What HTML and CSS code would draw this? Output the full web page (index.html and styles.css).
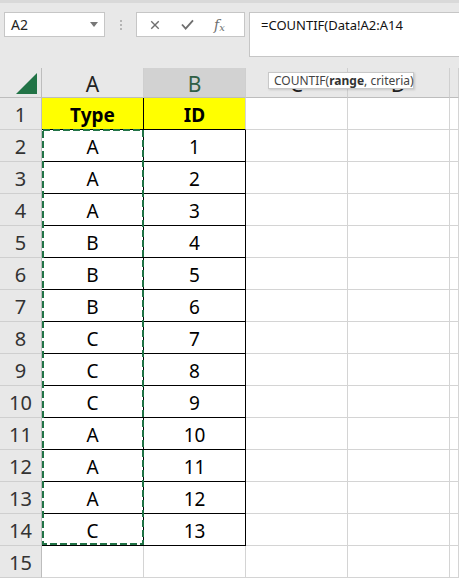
FILE: index.html
```html
<!DOCTYPE html>
<html>
  <head>
    <link rel="stylesheet" href="styles.css">
  </head>
  <body>
    <div class="app">
      <!-- formula bar -->
      <div class="toolbar">
        <div class="name-box">
          <span>A2</span>
          <svg class="caret" viewBox="0 0 8 5"><polygon points="0,0 8,0 4,5"></polygon></svg>
        </div>
        <div class="grip"><i></i><i></i><i></i></div>
        <div class="fx-box">
          <svg class="tool" viewBox="0 0 12 12">
            <line x1="1.5" y1="1.5" x2="10.5" y2="10.5"></line>
            <line x1="10.5" y1="1.5" x2="1.5" y2="10.5"></line>
          </svg>
          <svg class="tool check" viewBox="0 0 14 12">
            <polyline points="1,6 5,10.5 13,1.5"></polyline>
          </svg>
          <span class="fx">f<sub>x</sub></span>
        </div>
        <div class="formula">=COUNTIF(Data!A2:A14</div>
      </div>

      <!-- sheet -->
      <div class="sheet">
        <div class="corner">
          <svg viewBox="0 0 22 22"><polygon points="0,22 22,22 22,0"></polygon></svg>
        </div>
        <div class="col-head">A</div>
        <div class="col-head selected">B</div>
        <div class="col-head">C</div>
        <div class="col-head">D</div>
        <div class="col-head"></div>
      </div>
      <div class="sheet" id="rows"></div>

      <div class="copy-marquee">
        <svg viewBox="0 0 102 416" width="102" height="416">
          <rect x="1" y="1" width="100" height="414"></rect>
        </svg>
      </div>
      <div class="tooltip">COUNTIF(<b>range</b>, criteria)</div>
    </div>

    <script>
      const types = ["A", "A", "A", "B", "B", "B", "C", "C", "C", "A", "A", "A", "C"];
      const rows = document.getElementById("rows");

      const cell = (cls, text) => {
        const el = document.createElement("div");
        el.className = cls;
        el.textContent = text;
        rows.appendChild(el);
      };

      for (let r = 1; r <= 15; r++) {
        cell("row-head", r);
        if (r === 1) {
          cell("cell data head-cell", "Type");
          cell("cell data head-cell last", "ID");
        } else if (r <= 14) {
          cell("cell data", types[r - 2]);
          cell("cell data edge", r - 1);
        } else {
          cell("cell", "");
          cell("cell", "");
        }
        cell("cell", "");
        cell("cell", "");
        cell("cell", "");
      }
    </script>
  </body>
</html>
```

FILE: styles.css
```css
* {
  margin: 0;
  padding: 0;
  box-sizing: border-box;
}

body {
  width: 459px;
  height: 580px;
  overflow: hidden;
  background: #ffffff;
  font-family: "Noto Sans", "Open Sans", sans-serif;
  color: #000;
}

.app {
  position: relative;
}

.toolbar {
  height: 68px;
  background: #e8e8e8;
  border-top: 3px solid #d9d9d9;
  display: flex;
  align-items: flex-start;
  padding-top: 9px;
}

.name-box {
  margin-left: 4px;
  width: 101px;
  height: 25px;
  background: #fff;
  border: 1px solid #c6c6c6;
  display: flex;
  align-items: center;
  justify-content: space-between;
  padding: 0 6px 0 6px;
  font-size: 14px;
  color: #222;
}

.caret {
  width: 8px;
  height: 5px;
  fill: #777;
}

.grip {
  width: 31px;
  height: 25px;
  display: flex;
  flex-direction: column;
  align-items: center;
  justify-content: center;
  gap: 2px;
}

.grip i {
  width: 2px;
  height: 2px;
  background: #b5b5b5;
}

.fx-box {
  width: 109px;
  height: 25px;
  background: #fff;
  border: 1px solid #c6c6c6;
  display: flex;
  align-items: center;
  padding-left: 13px;
  gap: 22px;
}

.tool {
  width: 10px;
  height: 10px;
  stroke: #6f6f6f;
  stroke-width: 1.6;
  fill: none;
}

.tool.check {
  width: 13px;
  height: 11px;
  stroke-width: 2;
  margin-left: -1px;
}

.fx {
  font-family: "DejaVu Serif", "Liberation Serif", serif;
  font-style: italic;
  font-size: 14px;
  color: #6f6f6f;
  margin-left: -2px;
}

.fx sub {
  font-size: 10px;
  vertical-align: -1px;
}

.formula {
  flex: 1;
  margin-left: 4px;
  height: 45px;
  background: #fff;
  border: 1px solid #c6c6c6;
  border-right: none;
  padding: 3px 0 0 11px;
  font-size: 13px;
  color: #111;
}

.sheet {
  display: grid;
  grid-template-columns: 42px 102px 102px 102px 102px 1fr;
}

.corner,
.col-head {
  height: 30px;
  background: #e8e8e8;
  border-right: 1px solid #cfcfcf;
  border-bottom: 1px solid #bdbdbd;
}

.corner {
  border-right-color: #bdbdbd;
  display: flex;
  align-items: flex-end;
  justify-content: flex-end;
  padding: 0 4px 3px 0;
}

.corner svg {
  width: 21px;
  height: 21px;
  fill: #217346;
}

.col-head {
  display: flex;
  align-items: center;
  justify-content: center;
  font-size: 21px;
  color: #222;
  padding-top: 2px;
}

.col-head.selected {
  background: #d2d2d2;
  color: #2f5f45;
}

.row-head {
  height: 32px;
  background: #e8e8e8;
  border-right: 1px solid #bdbdbd;
  border-bottom: 1px solid #cfcfcf;
  display: flex;
  align-items: center;
  justify-content: center;
  font-size: 20px;
  color: #333;
  padding-top: 1px;
}

.cell {
  height: 32px;
  border-right: 1px solid #d4d4d4;
  border-bottom: 1px solid #d4d4d4;
  display: flex;
  align-items: center;
  justify-content: center;
  font-size: 19px;
  padding-top: 2px;
}

.cell.data {
  border-right-color: #000;
  border-bottom-color: #000;
}

.cell.head-cell {
  background: #ffff00;
  font-weight: 700;
}

.cell.head-cell.last {
  border-right-color: #d4d4d4;
}

.copy-marquee {
  position: absolute;
  left: 42px;
  top: 129px;
  width: 102px;
  height: 416px;
}

.copy-marquee rect {
  fill: none;
  stroke: #217346;
  stroke-width: 2;
  stroke-dasharray: 7 3;
}

.tooltip {
  position: absolute;
  left: 268px;
  top: 72px;
  width: 146px;
  height: 17px;
  background: #fff;
  border: 1px solid #c8c8c8;
  box-shadow: 1px 1px 2px rgba(0, 0, 0, 0.15);
  font-size: 12px;
  line-height: 15px;
  padding-left: 5px;
  color: #444;
  white-space: nowrap;
}

.tooltip b {
  color: #333;
}
```
